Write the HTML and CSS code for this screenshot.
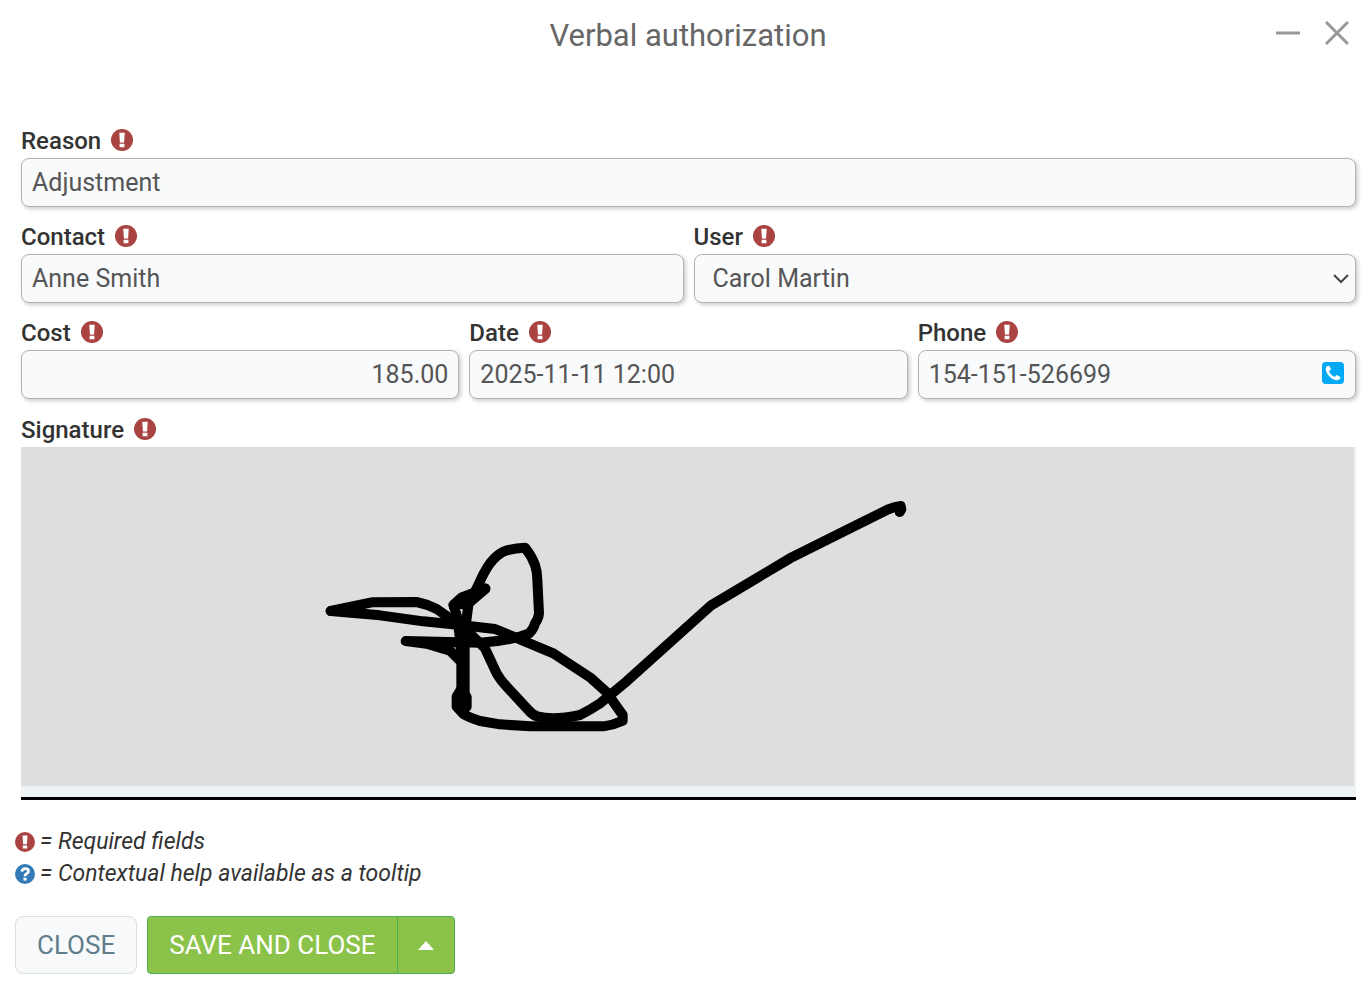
FILE: index.html
```html
<!DOCTYPE html>
<html lang="en">
<head>
    <meta charset="UTF-8">
    <title>Verbal authorization</title>
    <link rel="stylesheet" href="styles.css">
</head>

<body>
<!-- shared icons -->
<svg class="defs" aria-hidden="true">
    <symbol id="required" viewBox="0 0 64 64">
        <circle cx="32" cy="32" r="32" fill="#a94442"/>
        <path d="M24 11h16l-2 28H26zM25 43h14v10H25z" fill="#fff"/>
    </symbol>
    <symbol id="help" viewBox="0 0 64 64">
        <circle cx="32" cy="32" r="32" fill="#337ab7"/>
        <path d="M21 24q4-9 12-9 10 0 10 8 0 5-6 8-5 3-5 8" fill="none" stroke="#fff" stroke-width="9"/>
        <path d="M27 44h10v9H27z" fill="#fff"/>
    </symbol>
</svg>

<div class="modal">
    <div class="header">
        <h1>Verbal authorization</h1>
        <div class="tools">
            <button type="button" aria-label="Minimize">
                <svg viewBox="0 0 24 24"><path d="M0 12h24"/></svg>
            </button>
            <button type="button" aria-label="Close window">
                <svg viewBox="0 0 24 24"><path d="M1 1l22 22M23 1L1 23"/></svg>
            </button>
        </div>
    </div>

    <form>
        <div class="row">
            <div class="field">
                <label for="reason">Reason <svg class="icon"><use href="#required"/></svg></label>
                <input type="text" id="reason" value="Adjustment">
            </div>
        </div>
        <div class="row">
            <div class="field">
                <label for="contact">Contact <svg class="icon"><use href="#required"/></svg></label>
                <input type="text" id="contact" value="Anne Smith">
            </div>
            <div class="field">
                <label for="user">User <svg class="icon"><use href="#required"/></svg></label>
                <div class="select">
                    <select id="user">
                        <option>Carol Martin</option>
                    </select>
                    <svg class="arrow" viewBox="0 0 16 10"><path d="M1 1l7 7 7-7"/></svg>
                </div>
            </div>
        </div>
        <div class="row">
            <div class="field">
                <label for="cost">Cost <svg class="icon"><use href="#required"/></svg></label>
                <input type="text" id="cost" class="number" value="185.00">
            </div>
            <div class="field">
                <label for="date">Date <svg class="icon"><use href="#required"/></svg></label>
                <input type="text" id="date" value="2025-11-11 12:00">
            </div>
            <div class="field">
                <label for="phone">Phone <svg class="icon"><use href="#required"/></svg></label>
                <div class="phone">
                    <input type="text" id="phone" value="154-151-526699">
                    <a href="tel:154151526699" aria-label="Call">
                        <svg viewBox="0 128 1536 1536">
                            <rect y="128" width="1536" height="1536" rx="256" fill="#03a9f4"/>
                            <path fill="#fff" d="M1280 1193q0-11-2-16-3-8-38.5-29.5t-88.5-49.5l-53-29q-5-3-19-13t-25-15-21-5q-18 0-47 32.5t-57 65.5-44 33q-7 0-16.5-3.5t-15.5-6.5-17-9.5-14-8.5q-99-55-170.5-126.5t-126.5-170.5q-2-3-8.5-14t-9.5-17-6.5-15.5-3.5-16.5q0-13 20.5-33.5t45-38.5 45-39.5 20.5-36.5q0-10-5-21t-15-25-13-19q-3-6-15-28.5t-25-45.5-26.5-47.5-25-40.5-16.5-18-16-2q-48 0-101 22-46 21-80 94.5t-34 130.5q0 16 2.5 34t5 30.5 9 33 10 29.5 12.5 33 11 30q60 164 216.5 320.5t320.5 216.5q6 2 30 11t33 12.5 29.5 10 33 9 30.5 5 34 2.5q57 0 130.5-34t94.5-80q22-53 22-101z"/>
                        </svg>
                    </a>
                </div>
            </div>
        </div>

        <div class="caption">Signature <svg class="icon"><use href="#required"/></svg></div>
        <div class="signature">
            <svg viewBox="-837 -129 3999 1017" preserveAspectRatio="xMinYMin meet" role="img" aria-label="Signature">
                <path d="M92 363L215 337 350 336Q380 342 410 357L460 392 520 440 555 475 590 550Q600 568 620 590L685 660Q698 676 715 680 760 692 840 675 870 660 900 640L980 574 1232 347 1470 205 1670 105 1765 58Q1785 49 1802 48L1804 58 1799 66 1798 54"/>
                <path d="M92 363L240 376 370 394 480 405 585 417 640 440 760 490 870 562 920 607 968 675V692Q940 705 910 709H690L600 703 540 693Q510 684 490 672L470 650V620L488 590 486 520 478 430 470 375 460 345 485 322 556 295"/>
                <path d="M498 400L505 345 535 285Q552 245 570 220 588 197 610 185 640 174 675 173 695 198 705 225 712 245 712 270L717 370Q716 385 705 400 700 418 688 430 650 445 600 452L540 458 317 453 380 461 450 482 484 516V590L500 622V650L485 640"/>
                <path d="M556 297L500 345 472 340 462 350M478 420L495 425 520 455M494 440V600"/>
            </svg>
        </div>
    </form>

    <div class="legend">
        <p><svg class="icon"><use href="#required"/></svg> = Required fields</p>
        <p><svg class="icon"><use href="#help"/></svg> = Contextual help available as a tooltip</p>
    </div>

    <div class="footer">
        <button type="button" class="btn">CLOSE</button>
        <div class="btn-group">
            <button type="button" class="btn save">SAVE AND CLOSE</button>
            <button type="button" class="btn save toggle" aria-label="More options"><span class="caret"></span></button>
        </div>
    </div>
</div>
</body>
</html>
```
FILE: styles.css
```css
*{
    margin:0;
    padding:0;
    box-sizing:border-box;
}
body{
    background:#fff;
    color:#333;
    font-family:Roboto, sans-serif;
    font-size:24px;
}
button,input,select{
    font-family:inherit;
    font-size:inherit;
}
button{
    cursor:pointer;
}
.defs{
    display:none;
}

/* header */
.header{
    display:grid;
    grid-template-columns:1fr auto 1fr;
    align-items:center;
    height:70px;
    padding:0 14px 0 20px;
}
.header h1{
    grid-column:2;
    font-size:31px;
    font-weight:400;
    color:#666;
}
.tools{
    display:flex;
    justify-content:flex-end;
    gap:25px;
    padding:0 7px 4px 0;
}
.tools button{
    width:24px;
    height:24px;
    border:none;
    background:none;
}
.tools svg{
    display:block;
    width:24px;
    height:24px;
    fill:none;
    stroke:#999;
    stroke-width:3;
}

/* form */
form{
    padding:54px 14px 0 21px;
}
.row{
    display:flex;
    gap:10px;
    margin-bottom:13px;
}
.field{
    flex:1;
    min-width:0;
}
label,.caption{
    display:flex;
    align-items:center;
    gap:10px;
    height:34px;
    font-weight:500;
}
.caption{
    height:35px;
}
.icon{
    width:22px;
    height:22px;
}
label .icon,.caption .icon{
    margin-bottom:2px;
}
input,select{
    display:block;
    width:100%;
    height:49px;
    padding:0 10px;
    border:1px solid #b3b3b3;
    border-radius:8px;
    background:#f9fafc;
    box-shadow:2px 2px 4px rgba(0,0,0,.2);
    color:#555;
    font-size:25px;
}
.number{
    text-align:right;
}
.select,.phone{
    position:relative;
}
select{
    appearance:none;
    padding:0 18px;
}
.arrow{
    position:absolute;
    top:20px;
    right:7px;
    width:16px;
    height:10px;
    fill:none;
    stroke:#444;
    stroke-width:2;
    pointer-events:none;
}
.phone a{
    position:absolute;
    top:12px;
    right:12px;
}
.phone svg{
    display:block;
    width:22px;
    height:22px;
}
.signature{
    padding:0 2px 11px 0;
    border-bottom:3px solid #000;
    background:#eef3f6;
}
.signature svg{
    display:block;
    width:100%;
    height:339px;
    background:#dededc;
    fill:none;
    stroke:#000;
    stroke-width:30;
    stroke-linecap:round;
    stroke-linejoin:round;
}

/* legend */
.legend{
    padding:26px 15px 0;
    font-size:23px;
    font-style:italic;
    line-height:32px;
}
.legend p{
    display:flex;
    align-items:center;
    gap:5px;
}
.legend .icon{
    width:20px;
    height:20px;
}

/* buttons */
.footer{
    display:flex;
    gap:10px;
    padding:26px 15px 19px;
}
.btn-group{
    display:flex;
}
.btn{
    height:58px;
    padding:0 21px;
    border:1px solid #d8e0e3;
    border-radius:8px;
    background:#f7f9fb;
    color:#607d8b;
    font-size:26px;
}
.save{
    border-color:#4caf50;
    border-radius:4px 0 0 4px;
    background:#8bc34a;
    color:#fff;
}
.toggle{
    margin-left:-1px;
    padding:0 20px;
    border-radius:0 4px 4px 0;
}
.caret{
    display:block;
    border:8px solid transparent;
    border-top:none;
    border-bottom:9px solid #fff;
}
```
